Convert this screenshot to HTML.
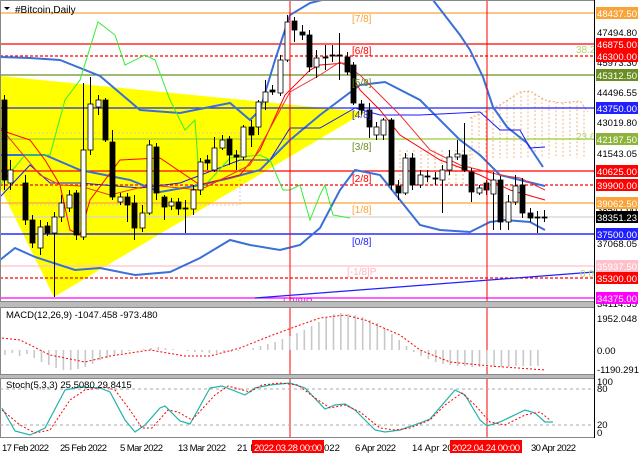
<!DOCTYPE html>
<html><head><meta charset="utf-8"><style>
html,body{margin:0;padding:0;background:#fff;width:640px;height:457px;overflow:hidden}
svg{display:block;font-family:"Liberation Sans",sans-serif}
</style></head><body>
<svg id="s" width="640" height="457" viewBox="0 0 640 457" xmlns="http://www.w3.org/2000/svg">
<rect x="0" y="0" width="640" height="457" fill="#fff"/>
<polygon points="0,76 365,112 54,297 0,187" fill="#ffff00"/>
<rect x="10" y="133" width="230" height="72" fill="none" stroke="#d8b8d8" stroke-dasharray="2,2" stroke-width="0.8"/>
<g id="cloud"></g>
<g stroke-width="1.2">
<line x1="0" y1="13" x2="594" y2="13" stroke="#f9a33b"/>
<line x1="0" y1="44" x2="594" y2="44" stroke="#f00"/>
<line x1="0" y1="56" x2="594" y2="56" stroke="#f00" stroke-dasharray="3,2"/>
<line x1="0" y1="75" x2="594" y2="75" stroke="#6b8e23"/>
<line x1="0" y1="108" x2="594" y2="108" stroke="#2020ff"/>
<line x1="0" y1="139" x2="594" y2="139" stroke="#9acd32"/>
<line x1="0" y1="171" x2="594" y2="171" stroke="#f00"/>
<line x1="0" y1="185" x2="594" y2="185" stroke="#f00" stroke-dasharray="3,2"/>
<line x1="0" y1="203" x2="594" y2="203" stroke="#f9a33b"/>
<line x1="0" y1="217" x2="594" y2="217" stroke="#d3d3d3"/>
<line x1="0" y1="234" x2="594" y2="234" stroke="#0000ff"/>
<line x1="0" y1="266" x2="594" y2="266" stroke="#ffc0cb"/>
<line x1="0" y1="278" x2="594" y2="278" stroke="#f00" stroke-dasharray="3,2"/>
<line x1="0" y1="298" x2="594" y2="298" stroke="#ff00ff"/>
</g>
<line x1="255" y1="298" x2="594" y2="272" stroke="#2020ff" stroke-width="1.2"/>
<g fill="none">
<polyline stroke="#3a6fd8" stroke-width="2" points="0,57 30,58 60,60 100,76 140,110 180,113 230,103 250,120 260,110 275,60 290,15 310,3 330,-2"/>
<polyline stroke="#3a6fd8" stroke-width="2" points="433,0 460,35 470,50 483,77 493,107 507,127 527,143 543,167"/>
<polyline stroke="#3a6fd8" stroke-width="2" points="0,155 45,155 80,170 130,180 160,192 200,185 230,178 260,170 290,140 320,115 360,85 385,82 420,100 460,140 480,155 500,175 520,180 545,186"/>
<polyline stroke="#3a6fd8" stroke-width="2" points="0,260 15,248 35,257 75,270 100,268 135,275 170,272 200,258 230,240 250,245 280,250 300,245 320,228 340,190 355,170 380,175 400,200 420,225 440,230 470,232 490,222 505,220 530,222 545,230"/>
<polyline stroke="#1a1aff" stroke-width="1" points="0,197 30,165 50,183 80,183 140,188 180,183 240,160 270,160 290,128 320,128 355,108 380,115 420,115 480,112 500,130 520,130 530,148 545,147"/>
<polyline stroke="#33ee33" stroke-width="1" points="0,185 25,155 50,155 65,100 80,80 98,22 115,35 125,65 145,55 155,60 170,100 185,130 195,120 200,190 210,180 230,158 260,155 270,160 283,190 290,190 300,185 310,220 320,195 325,185 333,215 350,218"/>
<polyline stroke="#f00" stroke-width="1" points="0,130 30,140 45,160 60,185 70,230 80,235 90,200 120,160 160,158 200,185 240,175 260,150 285,95 310,70 320,65 345,63 360,90 380,110 400,135 440,160 480,175 510,190 545,200"/>
<polyline stroke="#e33" stroke-width="1" points="0,127 40,175 60,185 80,186 110,195 150,185 200,190 250,165 290,92 320,75 340,62 360,75 400,115 430,150 460,165 500,175 520,178 545,190"/>
</g>
<g id="candles"></g>
<g font-size="10">
<text x="352" y="22" fill="#f9a33b">[7/8]</text>
<text x="352" y="54" fill="#f00">[6/8]</text>
<text x="352" y="86" fill="#6b8e23">[5/8]</text>
<text x="352" y="118" fill="#3333aa">[4/8]</text>
<text x="352" y="150" fill="#6b8e23">[3/8]</text>
<text x="352" y="182" fill="#f00">[2/8]</text>
<text x="352" y="213" fill="#f9a33b">[1/8]</text>
<text x="352" y="245" fill="#2020ff">[0/8]</text>
<text x="347" y="275" fill="#ffb6c1">[-1/8]P</text>
<text x="283" y="305" fill="#ff00ff">[-2/8]P</text>
<text x="576" y="53" fill="#b5d36a">38.2</text>
<text x="576" y="140" fill="#b5d36a">23.6</text>
<text x="580" y="277" fill="#b5d36a">0.0</text>
</g>
<polygon points="4,7 10,7 7,10" fill="#000"/>
<text x="15" y="13" font-size="10" fill="#000">#Bitcoin,Daily</text>
<line x1="290" y1="0" x2="290" y2="438" stroke="#f00" stroke-width="1"/>
<line x1="487" y1="0" x2="487" y2="438" stroke="#f00" stroke-width="1"/>
<rect x="0.5" y="0.5" width="594" height="301" fill="none" stroke="#888"/>
<rect x="0" y="302" width="594" height="5" fill="#bbb"/>
<rect x="0.5" y="307.5" width="594" height="67" fill="none" stroke="#888"/>
<rect x="0" y="375" width="594" height="3" fill="#bbb"/>
<rect x="0.5" y="378.5" width="594" height="59" fill="none" stroke="#888"/>
<line x1="594.5" y1="0" x2="594.5" y2="438" stroke="#000"/>
<g id="macd"></g>
<g id="stoch"></g>
<g font-size="9.5" fill="#000">
<text x="597" y="36" textLength="40">47494.80</text>
<text x="597" y="66" textLength="40">45973.30</text>
<text x="597" y="96" textLength="40">44496.55</text>
<text x="597" y="126" textLength="40">43019.80</text>
<text x="597" y="157" textLength="40">41543.05</text>
<text x="597" y="213" textLength="40">38541.00</text>
<text x="597" y="247" textLength="40">37068.05</text>
<text x="597" y="282" textLength="40">35591.30</text>
<text x="597" y="307" textLength="40">34114.55</text>
<text x="597" y="322" textLength="40">1952.048</text>
<text x="597" y="354">0.00</text>
<text x="597" y="373" textLength="42">-1190.291</text>
<text x="597" y="385">100</text>
<text x="597" y="392">80</text>
<text x="597" y="428">20</text>
<text x="597" y="436">0</text>
</g>
<g font-size="9.5" fill="#fff">
<rect x="596" y="7" width="42" height="12" fill="#f9a33b"/><text x="597" y="17" textLength="40">48437.50</text>
<rect x="596" y="38" width="42" height="12" fill="#f00"/><text x="597" y="48" textLength="40">46875.00</text>
<rect x="596" y="50" width="42" height="12" fill="#f00"/><text x="597" y="60" textLength="40">46300.00</text>
<rect x="596" y="69" width="42" height="12" fill="#6b8e23"/><text x="597" y="79" textLength="40">45312.50</text>
<rect x="596" y="102" width="42" height="12" fill="#2020ff"/><text x="597" y="112" textLength="40">43750.00</text>
<rect x="596" y="133" width="42" height="12" fill="#8db33a"/><text x="597" y="143" textLength="40">42187.50</text>
<rect x="596" y="165" width="42" height="12" fill="#f00"/><text x="597" y="175" textLength="40">40625.00</text>
<rect x="596" y="179" width="42" height="12" fill="#f00"/><text x="597" y="189" textLength="40">39900.00</text>
<rect x="596" y="197" width="42" height="12" fill="#f9a33b"/><text x="597" y="207" textLength="40">39062.50</text>
<rect x="596" y="211" width="42" height="12" fill="#000"/><text x="597" y="221" textLength="40">38351.23</text>
<rect x="596" y="228" width="42" height="12" fill="#2020ff"/><text x="597" y="238" textLength="40">37500.00</text>
<rect x="596" y="260" width="42" height="12" fill="#ffc0cb"/><text x="597" y="270" textLength="40">35937.50</text>
<rect x="596" y="272" width="42" height="12" fill="#f00"/><text x="597" y="282" textLength="40">35300.00</text>
<rect x="596" y="292" width="42" height="12" fill="#ff00ff"/><text x="597" y="302" textLength="40">34375.00</text>
</g>
<text x="6" y="318" font-size="9.5" fill="#000">MACD(12,26,9) -1047.458 -973.480</text>
<text x="6" y="388" font-size="9.5" fill="#000">Stoch(5,3,3) 25.5080 29.8415</text>
<g font-size="9.5" fill="#000">
<text x="2" y="451" textLength="47">17 Feb 2022</text>
<text x="60" y="451" textLength="47">25 Feb 2022</text>
<text x="120" y="451" textLength="43">5 Mar 2022</text>
<text x="178" y="451" textLength="48">13 Mar 2022</text>
<text x="237" y="451">21 M</text>
<text x="324" y="451">022</text>
<text x="355" y="451" textLength="41">6 Apr 2022</text>
<text x="412" y="451">14 Apr 20</text>
<text x="531" y="451" textLength="45">30 Apr 2022</text>
</g>
<rect x="252" y="440" width="72" height="13" fill="#f00"/><text x="254" y="451" font-size="9.5" fill="#fff" textLength="68">2022.03.28 00:00</text>
<rect x="450" y="440" width="72" height="13" fill="#f00"/><text x="452" y="451" font-size="9.5" fill="#fff" textLength="68">2022.04.24 00:00</text>
</svg>
<script>
(function(){
var NS="http://www.w3.org/2000/svg";
function el(p,t,a){var e=document.createElementNS(NS,t);for(var k in a)e.setAttribute(k,a[k]);p.appendChild(e);return e;}
var cg=document.getElementById("cloud");
var ctop=[[470,118],[500,105],[520,92],[530,91],[545,100],[560,103],[580,101],[588,112]];
function topAt(x){for(var i=0;i<ctop.length-1;i++){if(x>=ctop[i][0]&&x<=ctop[i+1][0]){var t=(x-ctop[i][0])/(ctop[i+1][0]-ctop[i][0]);return ctop[i][1]+t*(ctop[i+1][1]-ctop[i][1]);}}return 120;}
for(var x=472;x<=588;x+=7){el(cg,"line",{x1:x,y1:topAt(x),x2:x,y2:158,stroke:"#f4a460","stroke-dasharray":"2,2","stroke-width":"0.8"});}
el(cg,"polyline",{points:ctop.map(function(p){return p.join(",")}).join(" "),fill:"none",stroke:"#f4a460","stroke-dasharray":"2,2"});
for(var x=400;x<=470;x+=7){el(cg,"line",{x1:x,y1:150,x2:x,y2:185,stroke:"#f4a460","stroke-dasharray":"2,2","stroke-width":"0.8"});}
var c=[[4,100,180,95,190,0],[10,183,170,160,190,1],[25,183,220,175,225,0],[32,220,243,215,248,0],[40,248,227,220,255,1],[47,226,233,222,236,0],[54,233,217,212,297,1],[61,217,203,195,222,1],[69,208,195,190,212,1],[76,193,235,190,240,0],[83,237,150,83,240,1],[90,150,104,77,155,1],[98,107,100,95,115,1],[105,100,140,98,142,0],[112,142,197,130,200,0],[120,202,197,193,205,1],[127,197,205,193,222,0],[134,203,228,195,240,0],[142,228,213,205,232,1],[149,213,145,140,215,1],[156,147,193,143,200,0],[164,197,207,195,220,0],[171,206,202,198,210,1],[178,202,209,198,215,0],[185,208,209,200,233,0],[193,209,190,185,215,1],[200,190,162,158,195,1],[207,160,163,155,170,0],[214,170,148,137,172,1],[222,148,140,135,150,1],[229,139,155,136,165,0],[236,155,157,150,170,0],[243,157,127,125,160,1],[251,127,135,120,147,0],[258,127,102,100,135,1],[265,102,92,80,110,1],[272,90,92,85,95,0],[280,93,60,55,96,1],[287,60,22,15,62,1],[294,21,30,17,42,0],[302,32,35,25,40,0],[309,35,67,30,72,0],[316,67,58,50,78,1],[325,57,58,45,70,0],[332,55,56,45,62,0],[339,55,56,33,80,0],[347,57,72,52,75,0],[353,65,103,62,105,0],[361,104,110,100,115,0],[369,110,127,103,138,0],[376,135,127,122,140,1],[383,135,120,118,140,1],[391,120,185,118,190,0],[398,186,193,180,200,0],[405,193,158,153,195,1],[412,158,185,153,190,0],[420,185,175,170,188,1],[427,176,177,170,182,0],[435,178,179,172,185,0],[442,180,170,165,213,1],[449,170,157,150,175,1],[457,157,154,140,160,1],[464,155,170,123,172,0],[471,172,192,168,202,0],[479,193,188,185,195,1],[486,183,190,180,195,0],[493,194,180,172,230,1],[500,180,222,176,230,0],[508,222,202,195,230,1],[515,202,186,175,205,1],[522,185,213,178,218,0],[530,213,218,208,222,0],[537,217,217,211,233,0],[544,217,217,210,222,0]];
var g=document.getElementById("candles");
c.forEach(function(d){var x=d[0];el(g,"line",{x1:x+0.5,y1:d[3],x2:x+0.5,y2:d[4],stroke:"#000"});
var y1=Math.min(d[1],d[2]),y2=Math.max(d[1],d[2]);var h=Math.max(1,y2-y1);
el(g,"rect",{x:x-2,y:y1,width:5,height:h,fill:d[5]?"#fff":"#000",stroke:"#000","stroke-width":"0.8"});});
var m=document.getElementById("macd");
var hv=[-5,-3,-6,-4,-8,-12,-15,-18,-20,-20,-19,-17,-14,-10,-8,-5,-3,-1,0,1,2,3,2,1,0,-1,-2,-2,-3,-3,-2,-2,-1,0,2,4,6,8,11,14,17,20,24,28,32,36,37,36,35,33,30,27,22,16,10,4,-2,-6,-9,-12,-14,-15,-16,-16,-17,-17,-17,-17,-17,-17,-16,-16,-16,-16];
for(var i=0;i<hv.length;i++){var x=5+i*7.3;var v=hv[i];el(m,"line",{x1:x,y1:350,x2:x,y2:350-v,stroke:"#c8c8c8","stroke-width":"1.6"});}
el(m,"polyline",{points:"2,338 20,340 50,355 85,362 110,356 150,350 185,356 210,356 240,348 270,336 300,325 320,318 345,315 365,320 400,335 420,350 450,362 490,366 545,370",fill:"none",stroke:"#f00","stroke-dasharray":"2,2"});
var s=document.getElementById("stoch");
el(s,"line",{x1:0,y1:389,x2:594,y2:389,stroke:"#aaa","stroke-dasharray":"3,3"});
el(s,"line",{x1:0,y1:425,x2:594,y2:425,stroke:"#aaa","stroke-dasharray":"3,3"});
el(s,"polyline",{points:"2,408 15,431 30,435 45,428 65,390 80,387 100,388 110,392 125,420 135,432 145,425 160,408 165,406 180,421 190,424 210,388 222,386 245,395 255,388 270,385 290,383 305,388 325,409 335,405 345,404 355,410 375,430 385,432 400,430 420,423 430,419 455,390 465,395 480,420 487,426 500,422 525,410 535,413 545,422 553,422",fill:"none",stroke:"#20b2aa","stroke-width":"1.2"});
el(s,"polyline",{points:"2,410 20,425 35,433 50,430 70,400 85,390 105,387 115,390 130,410 142,428 152,428 168,410 178,412 192,420 215,395 228,386 250,392 262,385 280,383 298,385 315,398 330,408 345,405 360,412 380,428 395,430 410,428 430,420 445,405 462,393 475,405 490,422 505,425 525,415 540,412 550,420",fill:"none",stroke:"#f00","stroke-dasharray":"2,2"});
})();
</script>
</body></html>
